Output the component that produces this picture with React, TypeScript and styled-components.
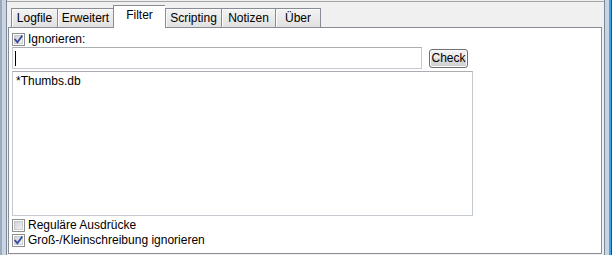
import { useId } from "react";
import styled, { createGlobalStyle } from "styled-components";

const TABS = [
  { label: "Logfile", width: 46 },
  { label: "Erweitert", width: 56 },
  { label: "Filter", width: 52, active: true },
  { label: "Scripting", width: 56 },
  { label: "Notizen", width: 54 },
  { label: "Über", width: 46 },
];

const GlobalStyle = createGlobalStyle`
  html, body {
    margin: 0;
    padding: 0;
    background: #f0f0f0;
  }
`;

const Window = styled.div`
  display: flex;
  width: 612px;
  height: 255px;
  overflow: hidden;
  font-family: "Liberation Sans", Arial, sans-serif;
  font-size: 12px;
  color: #000;
`;

const LeftFrame = styled.div`
  flex: none;
  width: 7px;
  background: linear-gradient(
    to right,
    #9aa9bb 0 2px,
    #c8d4e2 2px 6px,
    #7d8897 6px 7px
  );
`;

const RightFrame = styled.div`
  flex: none;
  width: 8px;
  background: linear-gradient(
    to right,
    #7d8897 0 1px,
    #c8d4e2 1px 5px,
    #3aa6ef 5px 7px,
    #35495f 7px 8px
  );
`;

const Main = styled.div`
  flex: 1;
  display: flex;
  flex-direction: column;
  padding-top: 1px;
  background: #f0f0f0;
`;

const Client = styled.div`
  flex: 1;
  display: flex;
  flex-direction: column;
  border-top: 1px solid #a5a5a5;
  padding: 3px 2px 1px 1px;
`;

const TabStrip = styled.div`
  display: flex;
  align-items: flex-end;
  height: 22px;
  padding-left: 3px;
  position: relative;
  z-index: 1;
`;

const Tab = styled.div<{ $active?: boolean; $last?: boolean; $width: number }>`
  box-sizing: border-box;
  width: ${(p) => p.$width}px;
  height: ${(p) => (p.$active ? 23 : 19)}px;
  margin-bottom: ${(p) => (p.$active ? -1 : 0)}px;
  padding-top: 2px;
  border: 1px solid #898c95;
  border-bottom: none;
  border-right: ${(p) => (p.$last ? "1px solid #898c95" : "none")};
  background: ${(p) =>
    p.$active ? "#ffffff" : "linear-gradient(#f3f3f3, #e1e1e1)"};
  box-shadow: ${(p) => (p.$active ? "none" : "inset 1px 1px 0 #fbfbfb")};
  text-align: center;
  line-height: 14px;
`;

const Panel = styled.div`
  flex: 1;
  display: flex;
  flex-direction: column;
  border: 1px solid #898c95;
  background: #ffffff;
  padding: 4px 3px;
`;

const CheckRow = styled.label<{ $gap?: number }>`
  display: flex;
  align-items: center;
  gap: 3px;
  height: 15px;
  line-height: 15px;
  margin-top: ${(p) => p.$gap ?? 0}px;
`;

const InputRow = styled.div`
  display: flex;
  height: 22px;
`;

const TextBox = styled.div`
  box-sizing: border-box;
  width: 410px;
  height: 22px;
  display: flex;
  align-items: center;
  padding-left: 2px;
  border: 1px solid #abadb3;
  border-color: #abadb3 #dbdfe6 #e3e9ef #dbdfe6;
  border-top-color: #abadb3;
  border-left-color: #c5c9d0;
  border-right-color: #c5c9d0;
  border-bottom-color: #c5c9d0;
`;

const Caret = styled.span`
  width: 1px;
  height: 15px;
  background: #000;
`;

const Button = styled.button`
  box-sizing: border-box;
  width: 39px;
  height: 19px;
  margin: 2px 0 0 7px;
  padding: 0;
  border: 1px solid #707070;
  border-radius: 3px;
  background: linear-gradient(#f2f2f2 0%, #ebebeb 50%, #dddddd 50%, #cfcfcf 100%);
  box-shadow: inset 0 0 0 1px #fbfbfb;
  font: inherit;
  line-height: 15px;
  color: #000;
`;

const ListBox = styled.div`
  box-sizing: border-box;
  width: 461px;
  height: 145px;
  margin-top: 2px;
  padding: 2px 3px;
  border: 1px solid #abadb3;
  border-top-color: #abadb3;
  border-left-color: #c5c9d0;
  border-right-color: #c5c9d0;
  border-bottom-color: #c5c9d0;
  line-height: 14px;
`;

const Check = ({ checked }: { checked?: boolean }) => {
  const id = useId();
  return (
    <svg width="13" height="13" viewBox="0 0 13 13" style={{ flex: "none" }}>
      <defs>
        <linearGradient id={id} x1="0" y1="0" x2="1" y2="1">
          <stop offset="0" stopColor="#cbcfd5" />
          <stop offset="1" stopColor="#f6f6f6" />
        </linearGradient>
      </defs>
      <rect x="0.5" y="0.5" width="12" height="12" fill="#ffffff" stroke="#8f8f8f" />
      <rect x="2" y="2" width="9" height="9" fill={`url(#${id})`} />
      <rect x="2.5" y="2.5" width="8" height="8" fill="none" stroke="#b8bcc3" strokeOpacity="0.6" />
      {checked && (
        <path
          d="M3.2 6.6 L5.4 9.3 L9.8 3.2"
          fill="none"
          stroke="#34479a"
          strokeWidth="1.7"
          strokeLinecap="square"
          strokeLinejoin="miter"
        />
      )}
    </svg>
  );
};

export default function App() {
  return (
    <Window>
      <GlobalStyle />
      <LeftFrame />
      <Main>
        <Client>
          <TabStrip>
            {TABS.map((tab, i) => (
              <Tab
                key={tab.label}
                $active={tab.active}
                $last={i === TABS.length - 1}
                $width={tab.width}
              >
                {tab.label}
              </Tab>
            ))}
          </TabStrip>
          <Panel>
            <CheckRow>
              <Check checked />
              <span>Ignorieren:</span>
            </CheckRow>
            <InputRow>
              <TextBox>
                <Caret />
              </TextBox>
              <Button>Check</Button>
            </InputRow>
            <ListBox>*Thumbs.db</ListBox>
            <CheckRow $gap={2}>
              <Check />
              <span>Reguläre Ausdrücke</span>
            </CheckRow>
            <CheckRow>
              <Check checked />
              <span>Groß-/Kleinschreibung ignorieren</span>
            </CheckRow>
          </Panel>
        </Client>
      </Main>
      <RightFrame />
    </Window>
  );
}
